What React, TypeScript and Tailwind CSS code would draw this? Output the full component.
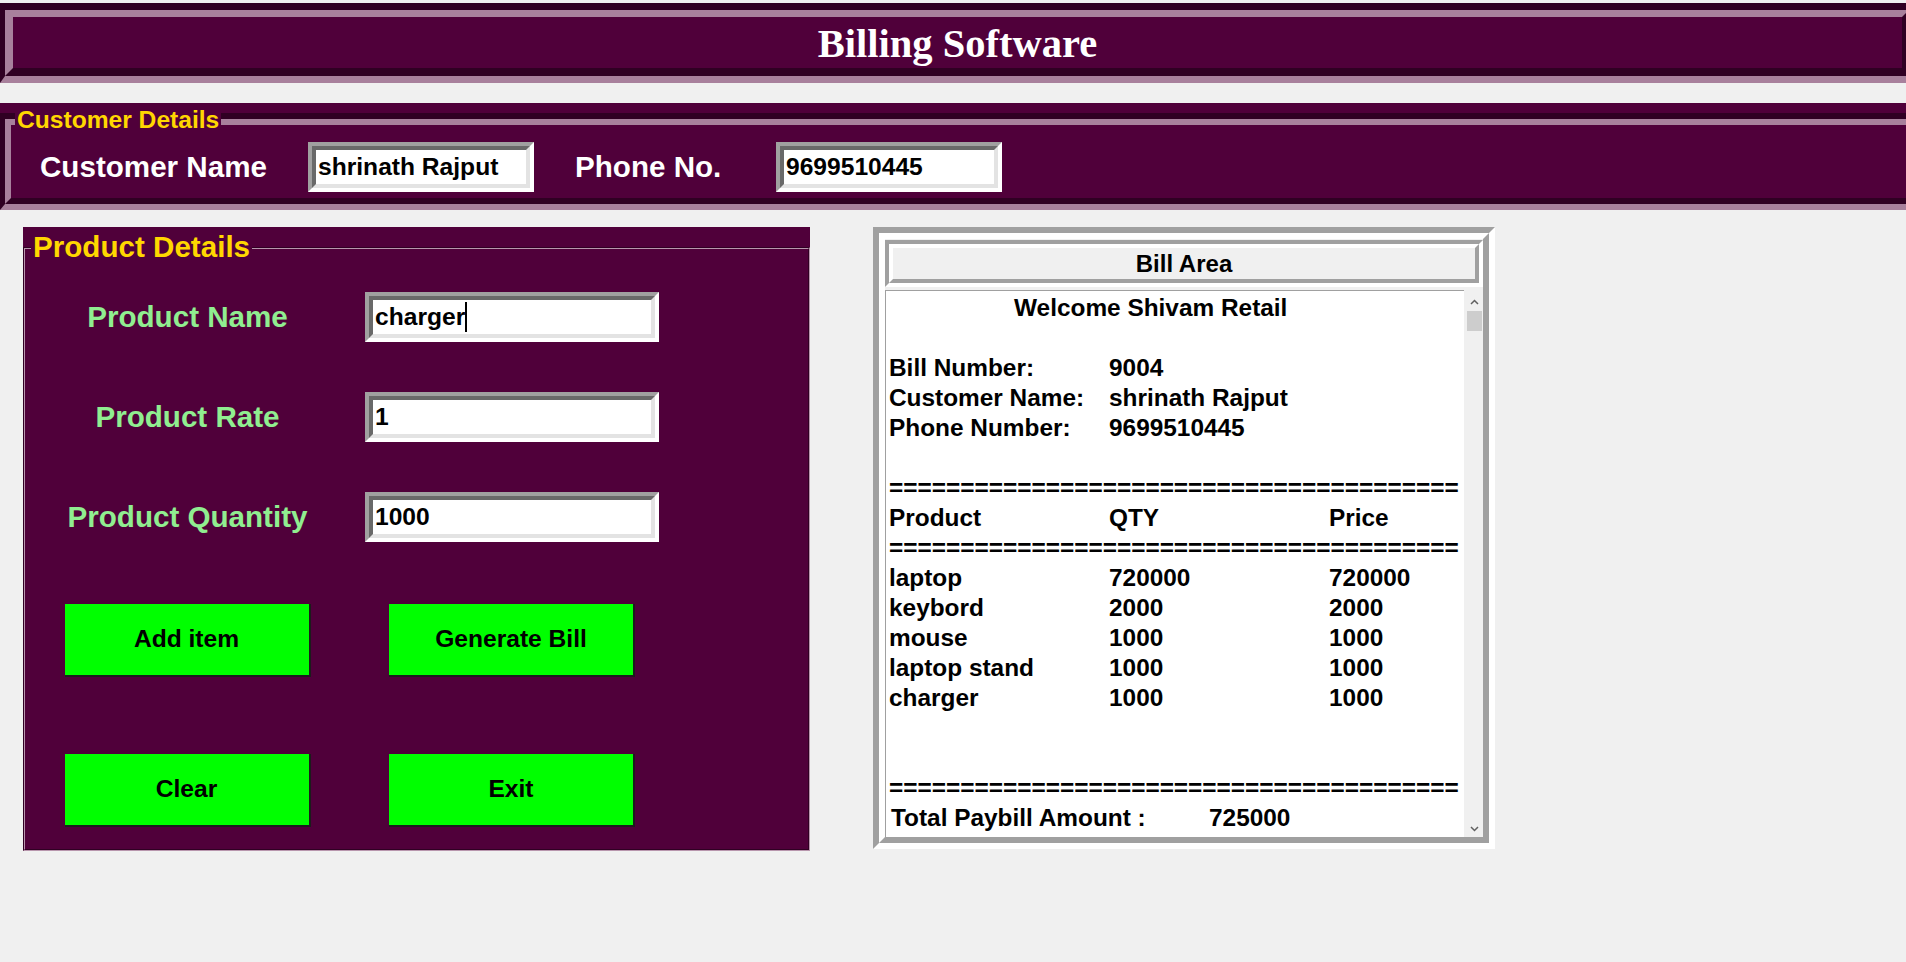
import React from "react";

const items: [string, string, string][] = [
  ["laptop", "720000", "720000"],
  ["keybord", "2000", "2000"],
  ["mouse", "1000", "1000"],
  ["laptop stand", "1000", "1000"],
  ["charger", "1000", "1000"],
];

const rule = "=".repeat(40);

function Entry({
  value,
  className,
  cursor,
}: {
  value: string;
  className: string;
  cursor?: boolean;
}) {
  return (
    <div
      className={`h-[50px] border-[4px] border-t-[#a0a0a0] border-l-[#a0a0a0] border-b-white border-r-white ${className}`}
    >
      <div className="flex h-full items-center border-[4px] border-t-[#696969] border-l-[#696969] border-b-[#e3e3e3] border-r-[#e3e3e3] bg-white pl-[2px] text-[24.6px] font-bold whitespace-nowrap text-black">
        {value}
        {cursor && <span className="h-[30px] w-[2px] bg-black" />}
      </div>
    </div>
  );
}

function GreenButton({ label }: { label: string }) {
  return (
    <button
      type="button"
      className="mx-auto flex h-[73px] w-[246px] items-center justify-center border-r-[2px] border-b-[2px] border-r-[#1c1c1c] border-b-[#1c1c1c] bg-[#00ff00] text-[24.6px] font-bold text-black"
    >
      {label}
    </button>
  );
}

function BillLine({ children }: { children?: React.ReactNode }) {
  return <div className="h-[30px] leading-[30px] whitespace-pre">{children}</div>;
}

export default function App() {
  return (
    <div className="min-h-screen w-full overflow-hidden bg-[#f0f0f0] pt-[3px] font-['Liberation_Sans',Arial,sans-serif]">
      {/* title bar */}
      <div className="w-[1916px] border-t-[7px] border-b-[7px] border-l-[5px] border-r-[7px] border-t-[#300023] border-l-[#300023] border-b-[#a8809c] border-r-[#a8809c]">
        <div className="flex h-[66px] items-center justify-center border-t-[7px] border-b-[8px] border-l-[8px] border-r-[7px] border-t-[#a8809c] border-l-[#a8809c] border-b-[#300023] border-r-[#300023] bg-[#50003a] pt-[4px]">
          <h1 className="font-['Liberation_Serif','Times_New_Roman',serif] text-[40.5px] leading-none font-bold text-white">
            Billing Software
          </h1>
        </div>
      </div>

      {/* customer details */}
      <div className="relative mt-[20px] h-[107px] w-[1930px] bg-[#50003a] pt-[10px]">
        <span className="absolute top-0 left-[15px] bg-[#50003a] px-[2px] text-[24.6px] leading-[34px] font-bold text-[#ffd700]">
          Customer Details
        </span>
        <div className="border-t-[6px] border-b-[6px] border-l-[5px] border-r-[6px] border-t-[#300023] border-l-[#300023] border-b-[#a8809c] border-r-[#a8809c]">
          <div className="h-[85px] border-[6px] border-t-[#a8809c] border-l-[#a8809c] border-b-[#300023] border-r-[#300023] pt-[17px]">
            <div className="flex h-[50px] items-center">
              <span className="ml-[29px] w-[226px] text-[29.6px] font-bold whitespace-nowrap text-white">
                Customer Name
              </span>
              <Entry value="shrinath Rajput" className="ml-[42px] w-[226px]" />
              <span className="ml-[41px] w-[151px] text-[29.6px] font-bold whitespace-nowrap text-white">
                Phone No.
              </span>
              <Entry value="9699510445" className="ml-[50px] w-[226px]" />
            </div>
          </div>
        </div>
      </div>

      <div className="mt-[17px] flex items-start">
        {/* product details */}
        <div className="relative ml-[23px] h-[624px] w-[787px] bg-[#50003a] pt-[20px]">
          <span className="absolute top-[3px] left-[8px] z-10 bg-[#50003a] px-[2px] text-[29.6px] leading-[34px] font-bold text-[#ffd700]">
            Product Details
          </span>
          <div className="h-[604px] border-[1px] border-t-[#300023] border-l-[#300023] border-b-[#b896ad] border-r-[#b896ad]">
            <div className="h-full border-[1px] border-t-[#b896ad] border-l-[#b896ad] border-b-[#300023] border-r-[#300023] pt-[18px]">
              <div className="grid grid-cols-[325px_294px] gap-x-[15px]">
                {[
                  ["Product Name", "charger"],
                  ["Product Rate", "1"],
                  ["Product Quantity", "1000"],
                ].map(([label, value], i) => (
                  <React.Fragment key={label}>
                    <div className="flex h-[100px] items-center justify-center text-[29.6px] font-bold whitespace-nowrap text-[#90ee90]">
                      {label}
                    </div>
                    <div className="flex h-[100px] items-center">
                      <Entry value={value} className="w-[294px]" cursor={i === 0} />
                    </div>
                  </React.Fragment>
                ))}
              </div>
              <div className="mt-[37px] grid grid-cols-[325px_294px] gap-x-[15px] gap-y-[77px]">
                <GreenButton label="Add item" />
                <GreenButton label="Generate Bill" />
                <GreenButton label="Clear" />
                <GreenButton label="Exit" />
              </div>
            </div>
          </div>
        </div>

        {/* bill area */}
        <div className="ml-[63px] h-[622px] w-[622px] border-[6px] border-t-[#a0a0a0] border-l-[#a0a0a0] border-b-white border-r-white">
          <div className="flex h-full flex-col border-[6px] border-t-white border-l-white border-b-[#a0a0a0] border-r-[#a0a0a0]">
            <div className="mt-[1px] h-[47px] border-[4px] border-t-[#a0a0a0] border-l-[#a0a0a0] border-b-white border-r-white">
              <div className="flex h-full items-center justify-center border-[4px] border-t-white border-l-white border-b-[#a0a0a0] border-r-[#a0a0a0] bg-[#f0f0f0] text-[24px] font-bold text-black">
                Bill Area
              </div>
            </div>
            <div className="mt-[3px] flex min-h-0 flex-1">
              <div className="flex-1 overflow-hidden border-t-[1px] border-l-[1px] border-t-[#a0a0a0] border-l-[#a0a0a0] bg-white pt-[2px] pl-[3px] text-[24.4px] font-bold text-black">
                <BillLine>
                  <span className="pl-[125px]">Welcome Shivam Retail</span>
                </BillLine>
                <BillLine />
                <BillLine>
                  <span className="inline-block w-[220px]">Bill Number:</span>9004
                </BillLine>
                <BillLine>
                  <span className="inline-block w-[220px]">Customer Name:</span>shrinath Rajput
                </BillLine>
                <BillLine>
                  <span className="inline-block w-[220px]">Phone Number:</span>9699510445
                </BillLine>
                <BillLine />
                <BillLine>{rule}</BillLine>
                <BillLine>
                  <span className="inline-block w-[220px]">Product</span>
                  <span className="inline-block w-[220px]">QTY</span>Price
                </BillLine>
                <BillLine>{rule}</BillLine>
                {items.map(([name, qty, price]) => (
                  <BillLine key={name}>
                    <span className="inline-block w-[220px]">{name}</span>
                    <span className="inline-block w-[220px]">{qty}</span>
                    {price}
                  </BillLine>
                ))}
                <BillLine />
                <BillLine />
                <BillLine>{rule}</BillLine>
                <BillLine>
                  <span className="inline-block w-[320px] pl-[2px]">Total Paybill Amount :</span>725000
                </BillLine>
              </div>
              <div className="ml-[2px] flex w-[17px] flex-col items-center bg-[#f0f0f0]">
                <svg width="9" height="6" viewBox="0 0 9 6" className="mt-[9px]">
                  <path d="M1 5 L4.5 1.5 L8 5" fill="none" stroke="#606060" strokeWidth="1.5" />
                </svg>
                <div className="mt-[6px] h-[20px] w-[15px] bg-[#cdcdcd]" />
                <div className="flex-1" />
                <svg width="9" height="6" viewBox="0 0 9 6" className="mb-[5px]">
                  <path d="M1 1 L4.5 4.5 L8 1" fill="none" stroke="#606060" strokeWidth="1.5" />
                </svg>
              </div>
            </div>
          </div>
        </div>
      </div>
    </div>
  );
}
